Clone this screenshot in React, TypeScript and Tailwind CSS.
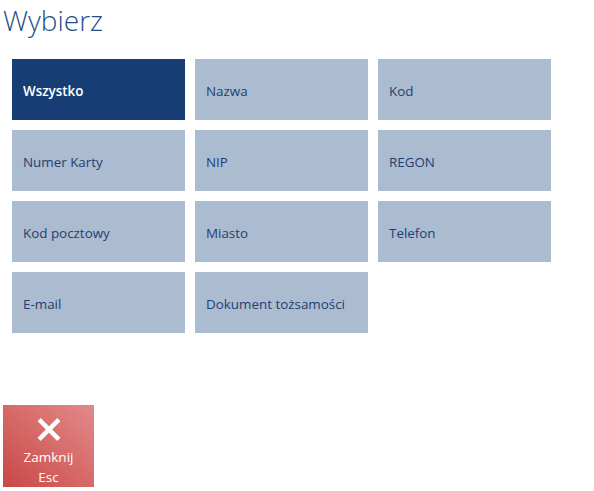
import React from "react";

const options = [
  "Wszystko",
  "Nazwa",
  "Kod",
  "Numer Karty",
  "NIP",
  "REGON",
  "Kod pocztowy",
  "Miasto",
  "Telefon",
  "E-mail",
  "Dokument tożsamości",
];

const App: React.FC = () => {
  const selected = "Wszystko";

  return (
    <div
      className="w-[594px] h-[491px] bg-white flex flex-col"
      style={{ fontFamily: '"Open Sans", "Noto Sans", sans-serif' }}
    >
      {/* Title */}
      <h1 className="text-[28px] font-light text-[#1f4f8a] leading-none pl-[3px] pt-[6px] h-[59px]">
        Wybierz
      </h1>

      {/* Options grid */}
      <div className="grid grid-cols-[173px_173px_173px] gap-x-[10px] gap-y-[10px] pl-[12px]">
        {options.map((name) => (
          <button
            key={name}
            className={`h-[61px] flex items-center pl-[11px] pt-[3px] text-[13.4px] text-left ${
              name === selected
                ? "bg-[#173e74] text-white font-semibold"
                : "bg-[#abbbd0] text-[#1f3f73]"
            }`}
          >
            {name}
          </button>
        ))}
      </div>

      <div className="flex-1" />

      {/* Close button */}
      <div className="pl-[3px] pb-[4px]">
        <button className="w-[91px] h-[82px] flex flex-col items-center justify-start pt-[12px] bg-gradient-to-tr from-[#c94646] to-[#e08a8a] text-white text-[13.5px] leading-[20px]">
          <svg
            className="w-[26px] h-[26px] mb-[5px]"
            viewBox="0 0 24 24"
            fill="none"
            stroke="currentColor"
            strokeWidth={4.2}
            strokeLinecap="square"
          >
            <path d="M4 4l16 16M20 4L4 20" />
          </svg>
          <span>Zamknij</span>
          <span>Esc</span>
        </button>
      </div>
    </div>
  );
};

export default App;
